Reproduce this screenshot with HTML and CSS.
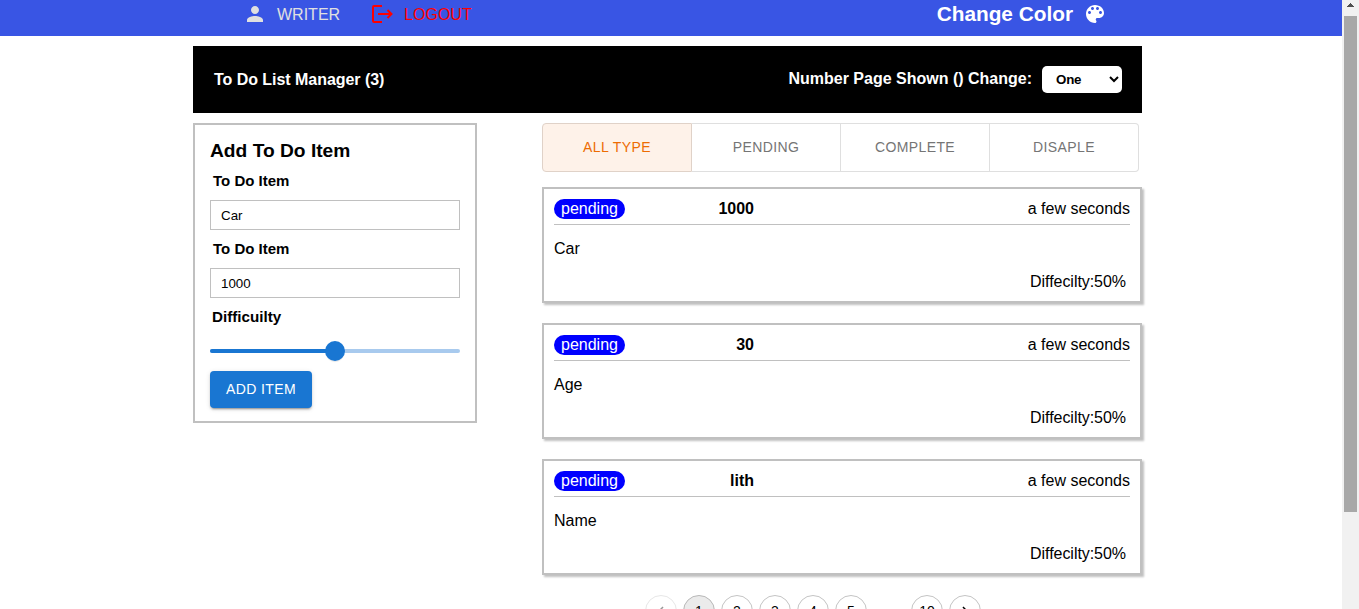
FILE: index.html
```html
<!DOCTYPE html>
<html lang="en">
<head>
<meta charset="utf-8">
<title>To Do List Manager</title>
<link rel="stylesheet" href="styles.css">
</head>
<body>
<div class="window">
  <div class="page">
    <header class="navbar">
      <nav class="nav-links">
        <a class="nav-link"><svg class="icon" viewBox="0 0 24 24"><path d="M12 12c2.21 0 4-1.79 4-4s-1.79-4-4-4-4 1.79-4 4 1.79 4 4 4zm0 2c-2.67 0-8 1.34-8 4v2h16v-2c0-2.66-5.33-4-8-4z"/></svg><span>WRITER</span></a>
        <a class="nav-link logout"><svg class="icon-logout" viewBox="0 0 22 20"><path d="M11 2H3Q2 2 2 3V17Q2 18 3 18H11M7 10H20.500M16.500 6L20.500 10L16.500 14"/></svg><span>LOGOUT</span></a>
      </nav>
      <div class="theme"><span>Change Color</span><svg class="icon-palette" viewBox="2 2 20 20"><path d="M12 3c-4.97 0-9 4.03-9 9s4.03 9 9 9c.83 0 1.5-.67 1.5-1.5 0-.39-.15-.74-.39-1.01-.23-.26-.38-.61-.38-.99 0-.83.67-1.5 1.5-1.5H16c2.76 0 5-2.24 5-5 0-4.42-4.03-8-9-8zm-5.5 9c-.83 0-1.5-.67-1.5-1.5S5.67 9 6.5 9 8 9.67 8 10.5 7.33 12 6.5 12zm3-4C8.67 8 8 7.33 8 6.5S8.67 5 9.5 5s1.5.67 1.5 1.5S10.33 8 9.5 8zm5 0c-.83 0-1.5-.67-1.5-1.5S13.67 5 14.5 5s1.5.67 1.5 1.5S15.33 8 14.5 8zm3 4c-.83 0-1.5-.67-1.5-1.5S16.67 9 17.5 9s1.5.67 1.5 1.5-.67 1.5-1.5 1.5z"/></svg></div>
    </header>
    <main class="container">
      <section class="titlebar">
        <h1>To Do List Manager (3)</h1>
        <div class="page-size"><span>Number Page Shown () Change:</span><select><option>One</option></select></div>
      </section>
      <div class="content">
        <form class="add-form">
          <h2>Add To Do Item</h2>
          <label>To Do Item</label>
          <input type="text" value="Car">
          <label>To Do Item</label>
          <input type="text" value="1000">
          <label class="difficulty">Difficuilty</label>
          <div class="slider"><div class="slider-fill"></div><div class="slider-thumb"></div></div>
          <button type="button" class="add-button">ADD ITEM</button>
        </form>
        <section class="list">
          <div class="tabs">
            <button class="tab active">ALL TYPE</button><button class="tab">PENDING</button><button class="tab">COMPLETE</button><button class="tab">DISAPLE</button>
          </div>
          <article class="card">
            <div class="card-head"><span class="badge">pending</span><b>1000</b><span class="time">a few seconds</span></div>
            <p class="name">Car</p><p class="level">Diffecilty:50%</p>
          </article>
          <article class="card">
            <div class="card-head"><span class="badge">pending</span><b>30</b><span class="time">a few seconds</span></div>
            <p class="name">Age</p><p class="level">Diffecilty:50%</p>
          </article>
          <article class="card">
            <div class="card-head"><span class="badge">pending</span><b>lith</b><span class="time">a few seconds</span></div>
            <p class="name">Name</p><p class="level">Diffecilty:50%</p>
          </article>
          <div class="pagination">
            <span class="pg disabled"><svg class="chev" viewBox="0 0 24 24"><path d="M15.41 7.41L14 6l-6 6 6 6 1.41-1.41L10.83 12z"/></svg></span>
            <span class="pg current">1</span><span class="pg">2</span><span class="pg">3</span><span class="pg">4</span><span class="pg">5</span>
            <span class="dots">…</span><span class="pg">10</span>
            <span class="pg"><svg class="chev" viewBox="0 0 24 24"><path d="M10 6L8.59 7.41 13.17 12l-4.58 4.59L10 18l6-6z"/></svg></span>
          </div>
        </section>
      </div>
    </main>
  </div>
  <div class="scrollbar"><svg class="scroll-arrow" viewBox="0 0 7 4"><path d="M3 0h1v1h1v1h1v1h1v1H0V3h1V2h1V1h1z"/></svg><div class="scroll-thumb"></div></div>
</div>
</body>
</html>
```
FILE: styles.css
```css
* { box-sizing: border-box; }
body { margin: 0; overflow: hidden; background: #fff; color: #000; font: 16px/18px "Liberation Sans", Arial, sans-serif; }
h1, h2, p { margin: 0; }
.window { display: flex; height: 609px; overflow: hidden; }
.page { width: 1342px; }
.navbar { display: flex; justify-content: space-between; height: 36px; padding: 0 237px 0 243px; background: #3955e4; }
.nav-links { display: flex; height: 28px; gap: 31px; }
.nav-link { display: flex; align-items: center; gap: 10px; color: #e0e0e0; }
.nav-link span { padding-top: 2px; }
.icon { width: 24px; height: 24px; fill: currentColor; }
.logout { color: #f00; gap: 11px; }
.icon-logout { width: 22px; height: 20px; fill: none; stroke: currentColor; stroke-width: 2; }
.theme { display: flex; align-items: center; height: 28px; gap: 12px; color: #fff; font-size: 20.8px; font-weight: bold; }
.icon-palette { width: 20px; height: 20px; fill: currentColor; }
.container { width: 950px; margin: 10px 0 0 193px; }
.titlebar { display: flex; justify-content: space-between; align-items: center; width: 949px; height: 67px; padding: 0 20px 0 21px; background: #000; color: #fff; }
.titlebar h1 { font-size: 16px; letter-spacing: -.04px; }
.page-size { display: flex; align-items: center; gap: 10px; font-weight: bold; }
.page-size span { padding-bottom: 2px; }
.page-size select { width: 80px; height: 27px; padding: 0 0 0 10px; border: 0; border-radius: 5px; background-color: #fff; color: #000; font: bold 13.333px "Liberation Sans", Arial, sans-serif; letter-spacing: -.2px; }
.content { display: flex; justify-content: space-between; align-items: flex-start; margin-top: 10px; width: 949px; }
.add-form { display: flex; flex-direction: column; width: 284px; height: 300px; padding: 14px 15px 10px; border: 2px solid silver; }
.add-form > * { flex-shrink: 0; }
.add-form h2 { font-size: 19.2px; line-height: 23px; }
.add-form label { height: 18px; margin: 10px 3px; font-size: 15px; font-weight: bold; }
.add-form label.difficulty { margin: 10px 2px 0; font-size: 15.2px; }
.add-form input { width: 250px; height: 30px; padding: 0 10px; border: 1px solid silver; font: 13.333px "Liberation Sans", Arial, sans-serif; }
.slider { position: relative; height: 4px; margin-top: 23px; border-radius: 2px; background: #a8caee; }
.slider-fill { width: 50%; height: 4px; border-radius: 2px; background: #1976d2; }
.slider-thumb { position: absolute; left: 115px; top: -8px; width: 20px; height: 20px; border-radius: 50%; background: #1976d2; box-shadow: 0 2px 1px -1px rgba(0,0,0,.1); }
.add-button { width: 102px; height: 37px; margin-top: 18px; padding: 0 0 1px; border: 0; border-radius: 4px; background: #1976d2; color: #fff; font: 14px "Liberation Sans", Arial, sans-serif; letter-spacing: .4px; box-shadow: 0 3px 1px -2px rgba(0,0,0,.2), 0 2px 2px rgba(0,0,0,.14), 0 1px 5px rgba(0,0,0,.12); }
.list { width: 600px; }
.tabs { display: flex; width: 597px; height: 49px; margin-bottom: 15px; }
.tab { flex: 1 1 149px; padding: 0 0 2px; border: 1px solid #dfdfdf; border-left: 0; background: #fff; color: #757575; font: 14px "Liberation Sans", Arial, sans-serif; letter-spacing: .4px; }
.tab.active { flex-basis: 150px; border: 1px solid #e0d2c8; border-radius: 4px 0 0 4px; background: #fef2e9; color: #ed6c02; }
.tab:last-child { border-radius: 0 4px 4px 0; }
.card { height: 116px; margin-bottom: 20px; padding: 10px; border: 2px solid silver; box-shadow: 2px 2px 2px rgba(0,0,0,.25); }
.card-head { display: grid; grid-template-columns: 100px 100px 1fr; height: 26px; border-bottom: 1px solid silver; line-height: 20px; }
.card-head b, .time { text-align: right; }
.badge { width: 71px; height: 20px; border-radius: 10px; background: #00f; color: #fff; text-align: center; }
.name { margin-top: 15px; }
.level { margin-top: 15px; padding-right: 4px; text-align: right; letter-spacing: -.05px; }
.pagination { display: flex; justify-content: center; gap: 6px; padding-right: 58px; }
.pg, .dots { flex: none; display: flex; align-items: center; justify-content: center; width: 32px; height: 32px; font-size: 14px; }
.pg { border: 1px solid #c4c4c4; border-radius: 50%; }
.current { background: #ebebeb; border-color: #b8b8b8; }
.disabled { opacity: .4; }
.chev { width: 18px; height: 18px; fill: currentColor; }
.scrollbar { display: flex; flex-direction: column; align-items: center; width: 17px; background: #f1f1f1; }
.scroll-arrow { width: 7px; height: 4px; margin: 3px 0 9px; fill: #505050; }
.scroll-thumb { width: 13px; height: 496px; background: #a8a8a8; }
```
